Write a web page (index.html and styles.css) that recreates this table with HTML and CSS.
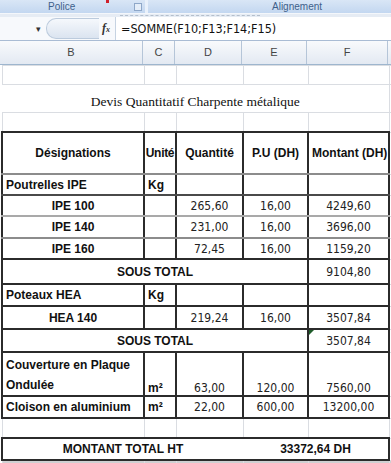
FILE: index.html
```html
<!DOCTYPE html>
<html lang="fr">
<head>
  <meta charset="UTF-8">
  <title>Devis Quantitatif Charpente</title>
  <link rel="stylesheet" href="styles.css">
</head>
<body>
  <div class="ribbon">
    <span class="ribbon-mark"></span>
    <div class="group group-police">
      <span class="group-label">Police</span>
      <span class="launcher"></span>
    </div>
    <div class="group group-align">
      <span class="group-label">Alignement</span>
    </div>
  </div>
  <div class="band"><span class="band-dots"></span></div>

  <div class="formula-bar">
    <div class="name-area">
      <span class="drop">&#9662;</span>
      <span class="round-btn"></span>
      <span class="fx">f<small>x</small></span>
    </div>
    <div class="formula">=SOMME(F10;F13;F14;F15)</div>
  </div>

  <div class="col-heads">
    <div class="ch ch-b">B</div>
    <div class="ch ch-c">C</div>
    <div class="ch ch-d">D</div>
    <div class="ch ch-e">E</div>
    <div class="ch ch-f">F</div>
    <div class="ch ch-g"></div>
  </div>

  <table class="sheet">
    <colgroup>
      <col class="w-b"><col class="w-c"><col class="w-d"><col class="w-e"><col class="w-f"><col class="w-g">
    </colgroup>
    <tr class="r-gap"><td></td><td></td><td></td><td></td><td></td><td></td></tr>
    <tr class="r-title"><td colspan="5" class="title">Devis Quantitatif Charpente métalique</td><td></td></tr>
    <tr class="r-gap"><td></td><td></td><td></td><td></td><td></td><td></td></tr>

    <tr class="r-head">
      <td class="c head line-gray">Désignations</td>
      <td class="c head unit line-gray">Unité</td>
      <td class="c head line-gray">Quantité</td>
      <td class="c head line-gray">P.U (DH)</td>
      <td class="c head line-gray">Montant (DH)</td>
      <td></td>
    </tr>
    <tr class="r-std">
      <td class="c lbl line-dark">Poutrelles IPE</td>
      <td class="c lbl kg line-dark">Kg</td>
      <td class="c line-dark"></td><td class="c line-dark"></td><td class="c line-dark"></td>
      <td></td>
    </tr>
    <tr class="r-std">
      <td class="c item line-light">IPE 100</td>
      <td class="c line-light"></td>
      <td class="c num line-light">265,60</td>
      <td class="c num line-light">16,00</td>
      <td class="c num line-light">4249,60</td>
      <td></td>
    </tr>
    <tr class="r-std r-tall">
      <td class="c item line-gray">IPE 140</td>
      <td class="c line-gray"></td>
      <td class="c num line-gray">231,00</td>
      <td class="c num line-gray">16,00</td>
      <td class="c num line-gray">3696,00</td>
      <td></td>
    </tr>
    <tr class="r-std">
      <td class="c item">IPE 160</td>
      <td class="c"></td>
      <td class="c num">72,45</td>
      <td class="c num">16,00</td>
      <td class="c num">1159,20</td>
      <td></td>
    </tr>
    <tr class="r-sub">
      <td colspan="4" class="c total">SOUS TOTAL</td>
      <td class="c num">9104,80</td>
      <td></td>
    </tr>
    <tr class="r-std r-tall">
      <td class="c lbl">Poteaux HEA</td>
      <td class="c lbl kg">Kg</td>
      <td class="c"></td><td class="c"></td><td class="c"></td>
      <td></td>
    </tr>
    <tr class="r-std r-tall2">
      <td class="c item">HEA 140</td>
      <td class="c"></td>
      <td class="c num">219,24</td>
      <td class="c num">16,00</td>
      <td class="c num">3507,84</td>
      <td></td>
    </tr>
    <tr class="r-sub2">
      <td colspan="4" class="c total">SOUS TOTAL</td>
      <td class="c num flagged">3507,84</td>
      <td></td>
    </tr>
    <tr class="r-double">
      <td class="c lbl wrap">Couverture en Plaque<br>Ondulée</td>
      <td class="c lbl kg bottom">m²</td>
      <td class="c num bottom">63,00</td>
      <td class="c num bottom">120,00</td>
      <td class="c num bottom">7560,00</td>
      <td></td>
    </tr>
    <tr class="r-std r-tall">
      <td class="c lbl">Cloison en aluminium</td>
      <td class="c lbl kg">m²</td>
      <td class="c num">22,00</td>
      <td class="c num">600,00</td>
      <td class="c num">13200,00</td>
      <td></td>
    </tr>
    <tr class="r-gap r-gap2"><td></td><td></td><td></td><td></td><td></td><td></td></tr>
    <tr class="r-grand">
      <td colspan="3" class="c grand grand-label">MONTANT TOTAL HT</td>
      <td colspan="2" class="c grand grand-value">33372,64 DH</td>
      <td></td>
    </tr>
    <tr class="r-next"><td></td><td></td><td></td><td></td><td></td><td></td></tr>
  </table>
</body>
</html>
```

FILE: styles.css
```css
body {
  margin: 0;
  width: 391px;
  height: 463px;
  overflow: hidden;
  background-color: #fff;
  font-family: "Liberation Sans", Arial, sans-serif;
  color: #111;
}

/* ribbon strip */
.ribbon {
  position: relative;
  display: flex;
  height: 13px;
  background: linear-gradient(#d9e6f6, #c3d7f0);
}
.ribbon-mark {
  position: absolute;
  left: 106px;
  top: 0;
  width: 3px;
  height: 3px;
  background-color: #d0202a;
}
.group {
  display: flex;
  align-items: center;
  height: 13px;
}
.group-police {
  width: 148px;
  padding-left: 48px;
  box-sizing: border-box;
  border-right: 3px solid #e9f1fb;
}
.group-align {
  flex: 1;
  padding-left: 124px;
}
.group-label {
  font-size: 10px;
  color: #3e5f8a;
  line-height: 10px;
}
.launcher {
  width: 6px;
  height: 6px;
  margin-left: auto;
  margin-right: 3px;
  border: 1px solid #8ea7c8;
  background-color: #e4edf8;
}
.band {
  height: 4px;
  background-color: #e6ecf4;
  border-top: 1px solid #f4f7fb;
  box-sizing: border-box;
  padding-left: 120px;
}
.band-dots {
  display: block;
  width: 140px;
  border-top: 1px dashed #b4bfcc;
  margin-top: 1px;
}

/* formula bar */
.formula-bar {
  display: flex;
  height: 23px;
  border-bottom: 1px solid #a9bcd4;
  background-color: #fff;
}
.name-area {
  display: flex;
  align-items: center;
  width: 115px;
  border-right: 1px solid #c6d3e2;
  background-color: #f7f9fc;
}
.drop {
  font-size: 9px;
  color: #333;
  margin-left: 36px;
  width: 10px;
}
.round-btn {
  width: 52px;
  height: 19px;
  border: 1px solid #bccbdd;
  border-right: none;
  border-radius: 10px 0 0 10px;
  background: linear-gradient(#f5f8fc, #dbe4f0);
}
.fx {
  font-family: "Liberation Serif", serif;
  font-style: italic;
  font-weight: bold;
  font-size: 12px;
  color: #333;
  margin-left: 3px;
}
.fx small {
  font-size: 8px;
}
.formula {
  padding-left: 5px;
  font-family: "Liberation Sans Narrow", "DejaVu Sans Condensed", sans-serif;
  font-size: 12.5px;
  line-height: 23px;
  color: #111;
}

/* column headers */
.col-heads {
  display: flex;
  height: 24px;
  background: linear-gradient(#f8fafc, #e3e9f2);
  border-bottom: 1px solid #9eb6ce;
  box-sizing: border-box;
}
.ch {
  box-sizing: border-box;
  border-right: 1px solid #b5c5d8;
  text-align: center;
  font-size: 11px;
  line-height: 23px;
  color: #444;
}
.ch-b { width: 143px; }
.ch-c { width: 32px; }
.ch-d { width: 67px; }
.ch-e { width: 65px; }
.ch-f { width: 81px; }
.ch-g { flex: 1; border-right: none; }

/* sheet */
.sheet {
  border-collapse: collapse;
  table-layout: fixed;
  width: 390px;
  margin-left: 1px;
}
.w-b { width: 142px; }
.w-c { width: 32px; }
.w-d { width: 67px; }
.w-e { width: 65px; }
.w-f { width: 81px; }
.w-g { width: 3px; }

.sheet td {
  border: 1px solid #dadde2;
  padding: 0 3px;
  font-size: 12px;
  white-space: nowrap;
  overflow: hidden;
}
.r-gap td { height: 18px; }
.r-title td { height: 25px; }
.sheet td.title {
  text-align: center;
  vertical-align: bottom;
  font-family: "Liberation Serif", serif;
  font-size: 13.5px;
  line-height: 16px;
  padding-bottom: 2px;
  border-left: none;
  border-right: none;
}
.r-head td { height: 40px; }
.r-std td { height: 19px; }
.r-tall td { height: 20px; }
.r-tall2 td { height: 21px; }
.r-sub td { height: 23px; }
.r-sub2 td { height: 21px; }
.r-double td { height: 42px; }
.r-gap2 td { height: 18px; }
.r-grand td { height: 20px; }
.r-next td {
  height: 4px;
  background-color: #cfd0d2;
}

.sheet td.c {
  border: 2px solid #2b2b2b;
}
.sheet td.line-gray { border-bottom-color: #8c8c8c; }
.sheet td.line-light { border-bottom-color: #a9a9a9; }
.sheet td.line-dark { border-bottom-color: #4a4a4a; }

.head {
  text-align: center;
  font-weight: bold;
  font-size: 12px;
}
.sheet td.unit {
  padding: 0;
  letter-spacing: -0.3px;
}
.lbl {
  font-weight: bold;
  text-align: left;
}
.kg {
  padding-left: 2px;
}
.item {
  font-weight: bold;
  text-align: center;
}
.total {
  font-weight: bold;
  font-size: 13px;
  text-align: center;
}
.num {
  text-align: center;
  font-family: "Liberation Sans Narrow", "DejaVu Sans Condensed", sans-serif;
  font-size: 12px;
  color: #222;
}
.wrap {
  line-height: 20px;
  vertical-align: bottom;
  padding-bottom: 1px;
}
.bottom {
  vertical-align: bottom;
  padding-bottom: 3px;
}
.flagged {
  position: relative;
}
.flagged::before {
  content: "";
  position: absolute;
  left: 0;
  top: 0;
  border-top: 5px solid #1f5c2a;
  border-right: 5px solid transparent;
}
.grand {
  font-weight: bold;
  font-size: 12px;
  text-align: center;
}
.sheet td.grand-label { border-right: none; }
.sheet td.grand-value { border-left: none; }
```
